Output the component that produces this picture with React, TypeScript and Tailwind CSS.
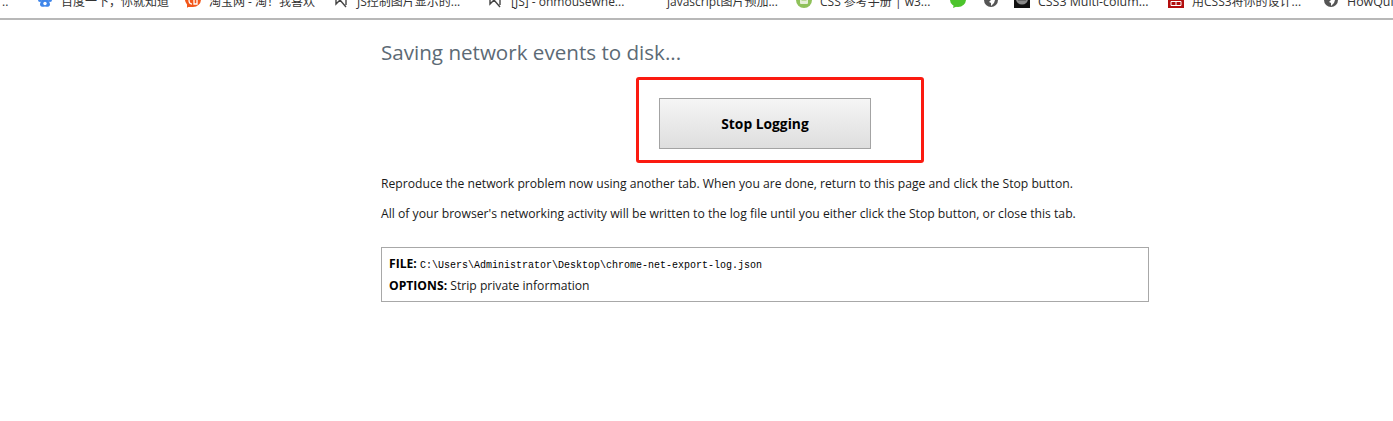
import React from 'react';

const Bookmark: React.FC<{ className: string; label?: string; icon?: React.ReactNode; latin?: boolean }> = ({ className, label, icon, latin }) => (
  <div className={`flex items-start h-4 gap-2 shrink-0 whitespace-nowrap ${className}`}>
    <span className="w-4 h-4 shrink-0 flex items-center justify-center">{icon}</span>
    {label && <span className={`h-4 leading-5 text-[#333] ${latin ? 'text-[12.4px]' : 'text-[12px]'}`}>{label}</span>}
  </div>
);

const Paw = () => (
  <svg width="16" height="16" viewBox="0 0 16 16" fill="#3f86ea">
    <circle cx="3" cy="8" r="2" />
    <circle cx="6" cy="4" r="2" />
    <circle cx="10.5" cy="4" r="2" />
    <circle cx="13" cy="8" r="2" />
    <path d="M8 6.5c2.5 0 5 4 5 6 0 2.5-3 2.5-5 2-2 .5-5 .5-5-2 0-2 2.500-6 5-6z" />
    <circle cx="8" cy="11.500" r="1.700" fill="#fff" />
  </svg>
);

const Taobao = () => (
  <svg width="16" height="16" viewBox="0 0 16 16">
    <path d="M8 0a8 7.500 0 0 1 0 15H3l-1 1v-3.500A7.500 7.500 0 0 1 8 0z" fill="#f2571b" />
    <path d="M4 8c0 3 1.500 4 3 4M9 6v6h3V7" fill="none" stroke="#fff" strokeWidth="1.300" />
  </svg>
);

const Loading = () => (
  <svg width="16" height="16" viewBox="0 0 16 16" fill="none" stroke="#444" strokeWidth="1.400">
    <path d="M3 2v10l4-4 6 7M13 7v6" />
  </svg>
);

const W3 = () => (
  <svg width="16" height="16" viewBox="0 0 16 16">
    <circle cx="8" cy="8" r="8" fill="#8fc15a" />
    <rect x="4" y="3" width="8" height="9" rx="1" fill="#e6efd8" />
    <path d="M5.500 6h5M5.500 8h5" stroke="#8fc15a" />
  </svg>
);

const Wechat = () => (
  <svg width="16" height="16" viewBox="0 0 16 16" fill="#4cc42c">
    <ellipse cx="8" cy="7.500" rx="8" ry="7.500" />
    <path d="M4 12l-1 4 5-2z" />
  </svg>
);

const Globe = () => (
  <svg width="16" height="16" viewBox="0 0 16 16">
    <circle cx="8" cy="8" r="7" fill="#555" />
    <path d="M8 8l4 0-1 3-3 3 0-3-2-1z" fill="#fff" />
  </svg>
);

const Thumb = () => (
  <svg width="16" height="16" viewBox="0 0 16 16">
    <rect width="16" height="16" fill="#111" />
    <ellipse cx="8" cy="7" rx="6" ry="5.500" fill="#8a8a8a" />
    <path d="M4 8h8M5 5.500h6" stroke="#444" />
  </svg>
);

const RedIcon = () => (
  <svg width="16" height="16" viewBox="0 0 16 16">
    <rect width="16" height="16" fill="#b30e0e" />
    <path d="M3 3.500h4v4H3zM9 3.500h4v4H9zM3 9.500h10v4H3zM8 9.500v4" fill="none" stroke="#fff" />
  </svg>
);

const App: React.FC = () => {
  return (
    <div className='h-[421px] bg-white overflow-hidden font-["Open_Sans","Noto_Sans_CJK_SC",sans-serif]'>
      <div className="h-5 border-b-2 border-[#b8b8b8] bg-white overflow-hidden flex items-end pb-[10px]">
        <div className="w-[37px] shrink-0 pl-0.5 h-4 text-[12px] leading-5 text-[#333]">..</div>
        <Bookmark className="w-[148px]" label="百度一下，你就知道" icon={<Paw />} />
        <Bookmark className="w-[148px]" label="淘宝网 - 淘！我喜欢" icon={<Taobao />} />
        <Bookmark className="w-[154px]" label="JS控制图片显示的..." icon={<Loading />} />
        <Bookmark className="w-[156px]" label="[JS] - onmousewhe..." icon={<Loading />} />
        <Bookmark className="w-[153px]" label="javascript图片预加..." />
        <Bookmark className="w-[154px]" label="CSS 参考手册 | w3..." icon={<W3 />} />
        <Bookmark className="w-[33px]" icon={<Wechat />} />
        <Bookmark className="w-[31px]" icon={<Globe />} />
        <Bookmark className="w-[154px]" latin label="CSS3 Multi-colum..." icon={<Thumb />} />
        <Bookmark className="w-[155px]" label="用CSS3将你的设计..." icon={<RedIcon />} />
        <Bookmark className="w-[70px]" latin label="HowQui" icon={<Globe />} />
      </div>
      <main className="w-[768px] ml-[381px]">
        <h1 className="mt-[18px] text-[20.6px] leading-[29px] font-normal text-[#5c6a75]">Saving network events to disk...</h1>
        <div className="mt-[10px] ml-[255px] w-[288px] h-[86px] border-[3px] border-[#fb1a10] rounded-[3px] flex items-start pl-5 pt-[18px]">
          <button className="w-[212px] h-[51px] pt-0.5 border border-[#a3a3a3] bg-gradient-to-b from-[#f5f5f5] to-[#dedede] text-[13.8px] font-bold text-black">
            Stop Logging
          </button>
        </div>
        <p className="mt-3 text-[12.17px] leading-[17px] text-[#1a1a1a]">
          Reproduce the network problem now using another tab. When you are done, return to this page and click the Stop button.
        </p>
        <p className="mt-[13px] text-[12.2px] leading-[17px] text-[#1a1a1a]">
          All of your browser's networking activity will be written to the log file until you either click the Stop button, or close this tab.
        </p>
        <div className="mt-[25px] h-[55px] border border-[#a8a8a8] pl-[7px] pt-1.5 text-[12.17px] leading-[20px] text-[#1a1a1a]">
          <div>
            <b className="text-black">FILE:</b>{' '}
            <span className="font-['Liberation_Mono',monospace] text-[10px] text-black">C:\Users\Administrator\Desktop\chrome-net-export-log.json</span>
          </div>
          <div>
            <b className="text-black">OPTIONS:</b> Strip private information
          </div>
        </div>
      </main>
    </div>
  );
};

export default App;
